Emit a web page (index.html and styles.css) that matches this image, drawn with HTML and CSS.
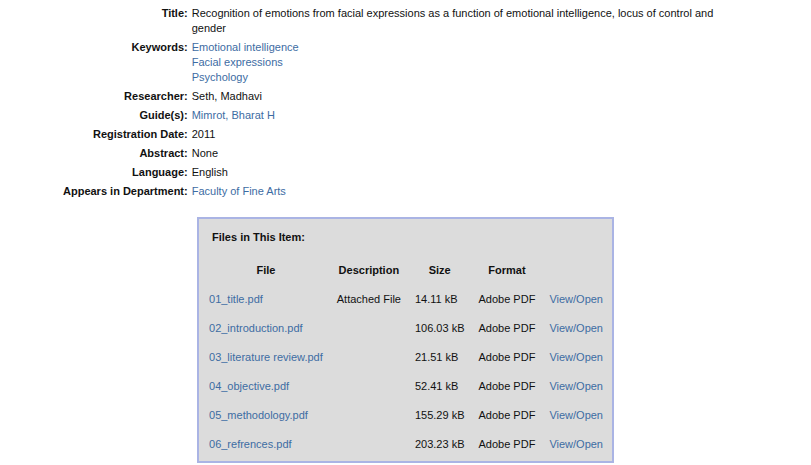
FILE: index.html
```
<!DOCTYPE html>
<html lang="en">
<head>
    <meta charset="UTF-8">
    <title>Item record</title>
    <link rel="stylesheet" href="styles.css">
</head>
<body>
    <div class="page">
        <table class="meta">
            <tr>
                <td class="label">Title:</td>
                <td class="value">Recognition of emotions from facial expressions as a function of emotional intelligence, locus of control and gender</td>
            </tr>
            <tr>
                <td class="label">Keywords:</td>
                <td class="value">
                    <a href="#">Emotional intelligence</a><br>
                    <a href="#">Facial expressions</a><br>
                    <a href="#">Psychology</a>
                </td>
            </tr>
            <tr>
                <td class="label">Researcher:</td>
                <td class="value">Seth, Madhavi</td>
            </tr>
            <tr>
                <td class="label">Guide(s):</td>
                <td class="value"><a href="#">Mimrot, Bharat H</a></td>
            </tr>
            <tr>
                <td class="label">Registration Date:</td>
                <td class="value">2011</td>
            </tr>
            <tr>
                <td class="label">Abstract:</td>
                <td class="value">None</td>
            </tr>
            <tr>
                <td class="label">Language:</td>
                <td class="value">English</td>
            </tr>
            <tr>
                <td class="label">Appears in Department:</td>
                <td class="value"><a href="#">Faculty of Fine Arts</a></td>
            </tr>
        </table>

        <div class="files-wrap">
            <div class="files">
                <div class="files-title">Files in This Item:</div>
                <table class="file-list">
                    <tr>
                        <th>File</th>
                        <th>Description</th>
                        <th>Size</th>
                        <th>Format</th>
                        <th></th>
                    </tr>
                    <tr>
                        <td><a href="#">01_title.pdf</a></td>
                        <td>Attached File</td>
                        <td>14.11 kB</td>
                        <td>Adobe PDF</td>
                        <td><a href="#">View/Open</a></td>
                    </tr>
                    <tr>
                        <td><a href="#">02_introduction.pdf</a></td>
                        <td></td>
                        <td>106.03 kB</td>
                        <td>Adobe PDF</td>
                        <td><a href="#">View/Open</a></td>
                    </tr>
                    <tr>
                        <td><a href="#">03_literature review.pdf</a></td>
                        <td></td>
                        <td>21.51 kB</td>
                        <td>Adobe PDF</td>
                        <td><a href="#">View/Open</a></td>
                    </tr>
                    <tr>
                        <td><a href="#">04_objective.pdf</a></td>
                        <td></td>
                        <td>52.41 kB</td>
                        <td>Adobe PDF</td>
                        <td><a href="#">View/Open</a></td>
                    </tr>
                    <tr>
                        <td><a href="#">05_methodology.pdf</a></td>
                        <td></td>
                        <td>155.29 kB</td>
                        <td>Adobe PDF</td>
                        <td><a href="#">View/Open</a></td>
                    </tr>
                    <tr>
                        <td><a href="#">06_refrences.pdf</a></td>
                        <td></td>
                        <td>203.23 kB</td>
                        <td>Adobe PDF</td>
                        <td><a href="#">View/Open</a></td>
                    </tr>
                </table>
            </div>
        </div>
    </div>
</body>
</html>
```

FILE: styles.css
```
body {
    margin: 0;
    padding: 0;
    background-color: #ffffff;
    color: #111111;
    font-family: "Liberation Sans", Arial, sans-serif;
    font-size: 11px;
    line-height: 15px;
}

a {
    color: #3d6ca3; /* muted link blue */
    text-decoration: none;
}

.page {
    padding-top: 4px;
}

/* item metadata */
.meta {
    width: 691px;
    margin: 0 auto;
    border-collapse: collapse;
}

.meta td {
    padding: 2px 3px;
    vertical-align: top;
}

.meta .label {
    font-weight: bold;
    text-align: right;
    white-space: nowrap;
    width: 1%;
    padding-right: 2px;
}

.meta .value {
    padding-left: 2px;
}

/* files box */
.files-wrap {
    text-align: center;
    margin-top: 16px;
}

.files {
    display: inline-block;
    text-align: left;
    background-color: #dcdcdc;
    border: 2px solid #aab4e4;
    padding: 11px 2px 2px 3px;
}

.files-title {
    font-weight: bold;
    padding-left: 10px;
    margin-bottom: 11px;
}

.file-list {
    border-collapse: collapse;
}

.file-list th,
.file-list td {
    padding: 7px;
    white-space: nowrap;
}

.file-list th {
    text-align: center;
}

.file-list td {
    text-align: left;
}
```
